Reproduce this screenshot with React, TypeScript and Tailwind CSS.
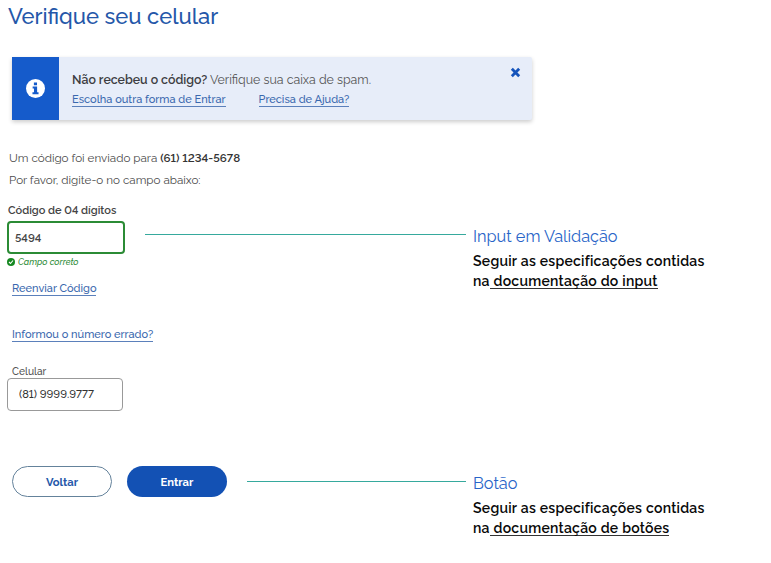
import React from 'react';

function Annotation({ title, target }: { title: string; target: string }) {
  return (
    <div className="ml-[7px] w-[260px] whitespace-nowrap">
      <h2 className="h-[23px] text-[16.3px] leading-[23px] text-[#2864c8]">{title}</h2>
      <p className="mt-[3px] text-[14px] font-semibold leading-5 tracking-[0.25px] text-[#080808]">
        Seguir as especificações contidas
        <br />
        na
        <span className="inline-block h-[18px] whitespace-pre border-b border-[#333] leading-5"> {target}</span>
      </p>
    </div>
  );
}

function TextLink({ children, className = '' }: { children: React.ReactNode; className?: string }) {
  return (
    <a href="#" className={`block h-[14px] w-fit whitespace-nowrap border-b border-[#5b80bb] text-[11px] font-medium leading-[13px] text-[#3a68ae] ${className}`}>
      {children}
    </a>
  );
}

export default function App() {
  return (
    <main className="flex h-[563px] w-[771px] flex-col overflow-hidden bg-white font-['Raleway','Lato',sans-serif] lining-nums text-[#444]">
      <h1 className="ml-2 h-8 whitespace-nowrap text-[22px] font-medium leading-8 text-[#2557a9]">Verifique seu celular</h1>

      <section className="ml-3 mt-[25px] flex h-[63px] w-[520px] rounded-r-[2px] bg-[#e7edf9] shadow-[0_2px_4px_rgba(0,0,0,0.2)]">
        <div className="flex w-[47px] items-center justify-center bg-[#155bcb]">
          <svg viewBox="0 0 20 20" className="size-[19px]">
            <circle cx="10" cy="10" r="10" fill="#fff" />
            <path d="M8.3 3.6h3.3v3H8.3zM7 8h4.7v6h1.5v2H6.8v-2h1.6v-4H7z" fill="#155bcb" />
          </svg>
        </div>
        <div className="ml-[13px] flex-1 pt-[14px]">
          <p className="h-[18px] whitespace-nowrap text-[12.36px] leading-[18px] text-[#555]">
            <strong className="font-semibold text-[#3d3d42]">Não recebeu o código?</strong> Verifique sua caixa de spam.
          </p>
          <div className="mt-1 flex">
            <TextLink className="mr-[33px]">Escolha outra forma de Entrar</TextLink>
            <TextLink>Precisa de Ajuda?</TextLink>
          </div>
        </div>
        <button className="mr-[11px] mt-[10px] size-[11px]" aria-label="Fechar">
          <svg viewBox="0 0 9 9" className="size-[11px]">
            <path d="M1.5 1.5l6 6m0-6l-6 6" stroke="#1554bb" strokeWidth="2.3" />
          </svg>
        </button>
      </section>

      <div className="ml-[9px] mt-[27px] whitespace-nowrap text-[11.65px] leading-[22px] text-[#4b4b4b]">
        <p>Um código foi enviado para <strong className="font-semibold text-[#333]">(61) 1234-5678</strong></p>
        <p>Por favor, digite-o no campo abaixo:</p>
      </div>

      <section className="mt-[10px] flex h-[127px]">
        <div className="w-[145px] whitespace-nowrap pl-[7px]">
          <label className="ml-px block h-5 text-[11px] font-semibold leading-5 text-[#444]">Código de 04 dígitos</label>
          <input readOnly value="5494" className="block h-[33px] w-[118px] rounded-[4px] border-2 border-[#2b8b35] px-[6px] text-[11.3px] font-semibold text-[#444] outline-none" />
          <p className="mt-[2px] flex h-3 items-center text-[8.9px] font-medium italic leading-3 text-[#2b8b35]">
            <svg viewBox="0 0 16 16" className="mr-[3px] size-2">
              <circle cx="8" cy="8" r="8" fill="#168821" />
              <path d="M4 8l3 3 5-6" stroke="#fff" strokeWidth="2.2" fill="none" />
            </svg>
            Campo correto
          </p>
          <TextLink className="ml-[5px] mt-[14px]">Reenviar Código</TextLink>
        </div>
        <div className="mt-[33px] h-px w-[321px] bg-[#36a99d]" />
        <div className="pt-[24px]"><Annotation title="Input em Validação" target="documentação do input" /></div>
      </section>

      <section className="w-[160px] pl-[7px]">
        <TextLink className="ml-[5px]">Informou o número errado?</TextLink>
        <label className="ml-[5px] mt-[23px] block h-[13px] text-[10.2px] font-medium leading-[13px] text-[#555]">Celular</label>
        <input readOnly value="(81) 9999.9777" className="block h-[33px] w-[116px] rounded-[4px] border border-[#999] pb-[2px] pl-[11px] text-[11.2px] font-medium text-[#333] outline-none" />
      </section>

      <section className="mt-[55px] flex pl-3">
        <button className="h-[31px] w-[100px] rounded-full border border-[#64829b] pt-px text-[11.2px] font-bold text-[#2557a9]">Voltar</button>
        <button className="ml-[15px] h-[31px] w-[100px] rounded-full bg-[#1351b4] pt-px text-[11.2px] font-bold text-white">Entrar</button>
        <div className="ml-5 mt-[15px] h-px w-[219px] bg-[#36a99d]" />
        <div className="pt-[6px]"><Annotation title="Botão" target="documentação de botões" /></div>
      </section>
    </main>
  );
}
